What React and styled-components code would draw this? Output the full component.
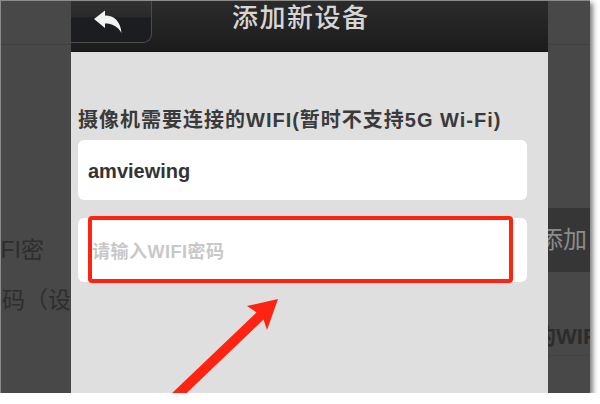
import React from "react";
import styled, { createGlobalStyle } from "styled-components";

const GlobalStyle = createGlobalStyle`
  html, body {
    margin: 0;
    padding: 0;
    background: #ffffff;
    overflow: hidden;
  }
  * {
    box-sizing: border-box;
  }
`;

const FONT = `"Liberation Sans", "Noto Sans CJK SC", sans-serif`;

const BackArrow = () => (
  <svg width="30" height="24" viewBox="0 0 30 24">
    <path
      d="M1 9 L12 0.5 L12 5.5 C21 5.5 27.5 11 28.5 23 C24.5 16 19 13.5 12 13.5 L12 18 Z"
      fill="#f2f2f2"
    />
  </svg>
);

const PointerArrow = () => (
  <ArrowLayer width="600" height="404" viewBox="0 0 600 404">
    <polygon
      points="278,299 267,330 263.5,319.6 173.5,405.6 166.5,398.4 256.5,312.4 247,306"
      fill="#ff2312"
    />
  </ArrowLayer>
);

const App = () => {
  return (
    <>
      <GlobalStyle />
      <Screen>
        <SideStrip>
          <NavGhost />
          <GhostBody>
            <GhostLine $pad={27}>WIFI密</GhostLine>
            <GhostLine $pad={0}>码（设</GhostLine>
          </GhostBody>
        </SideStrip>

        <Panel>
          <Header>
            <BackButton>
              <BackArrow />
            </BackButton>
            <Title>添加新设备</Title>
          </Header>

          <Body>
            <Label>摄像机需要连接的WIFI(暂时不支持5G Wi-Fi)</Label>
            <Field>
              <FieldValue>amviewing</FieldValue>
            </Field>
            <Field $gap={18} $h={64}>
              <Placeholder>请输入WIFI密码</Placeholder>
              <Highlight />
            </Field>
          </Body>
        </Panel>

        <RightStrip>
          <NavGhost />
          <GhostButton>添加</GhostButton>
          <GhostRow>的WIFI</GhostRow>
        </RightStrip>

        <PointerArrow />
      </Screen>
    </>
  );
};

export default App;

const Screen = styled.div`
  position: relative;
  display: flex;
  width: 590px;
  height: 393px;
  background: #484848;
  border-top: 1px solid #8c8c8c;
  border-left: 1px solid #8c8c8c;
  box-shadow: 3px 3px 5px rgba(0, 0, 0, 0.5);
  overflow: hidden;
  font-family: ${FONT};
`;

const SideStrip = styled.div`
  width: 70px;
  flex-shrink: 0;
  display: flex;
  flex-direction: column;
  overflow: hidden;
`;

const RightStrip = styled.div`
  flex: 1;
  display: flex;
  flex-direction: column;
  overflow: hidden;
`;

const NavGhost = styled.div`
  height: 44px;
  flex-shrink: 0;
  border-bottom: 1px solid #404040;
`;

const GhostBody = styled.div`
  display: flex;
  flex-direction: column;
  gap: 20px;
  padding-top: 190px;
`;

const GhostLine = styled.div`
  display: flex;
  justify-content: flex-end;
  height: 30px;
  line-height: 30px;
  padding-right: ${(p) => p.$pad}px;
  font-size: 23px;
  color: #2e2e2e;
  white-space: nowrap;
`;

const GhostButton = styled.div`
  margin-top: 163px;
  height: 64px;
  background: #363636;
  color: #8c8c8c;
  font-size: 24px;
  line-height: 64px;
  white-space: nowrap;
  text-indent: -9px;
`;

const GhostRow = styled.div`
  margin-top: 50px;
  height: 34px;
  line-height: 30px;
  font-size: 22px;
  font-weight: bold;
  color: #2c2c2c;
  white-space: nowrap;
  text-indent: -14px;
  border-bottom: 1px solid #434343;
`;

const Panel = styled.div`
  width: 477px;
  flex-shrink: 0;
  display: flex;
  flex-direction: column;
  background: #dfdfdf;
`;

const Header = styled.div`
  height: 51px;
  display: flex;
  align-items: flex-start;
  background: linear-gradient(#2b2b2b, #1c1c1c);
  border-bottom: 1px solid #151515;
`;

const BackButton = styled.div`
  width: 81px;
  height: 42px;
  display: flex;
  align-items: center;
  justify-content: center;
  padding-right: 6px;
  background: linear-gradient(#323232 0%, #2a2a2a 38%, #1b1d21 42%, #1b1d21 100%);
  border-right: 1px solid #4c4c4c;
  border-bottom: 1px solid #4c4c4c;
  border-bottom-right-radius: 9px;
`;

const Title = styled.div`
  margin-left: 80px;
  line-height: 34px;
  font-size: 26px;
  font-weight: 500;
  letter-spacing: 1.5px;
  color: #d6d6d6;
`;

const Body = styled.div`
  display: flex;
  flex-direction: column;
  padding: 54px 21px 0 7px;
`;

const Label = styled.div`
  height: 28px;
  line-height: 28px;
  font-size: 20px;
  font-weight: bold;
  letter-spacing: 1px;
  color: #3a3a3a;
  white-space: nowrap;
`;

const Field = styled.div`
  position: relative;
  margin-top: ${(p) => p.$gap || 6}px;
  height: ${(p) => p.$h || 60}px;
  display: flex;
  align-items: center;
  background: #ffffff;
  border-radius: 6px;
`;

const FieldValue = styled.span`
  padding: 3px 0 0 10px;
  font-size: 20px;
  font-weight: bold;
  color: #333333;
`;

const Placeholder = styled.span`
  padding: 0 0 0 14px;
  font-size: 18px;
  font-weight: bold;
  letter-spacing: 0.5px;
  color: #c8c8c8;
`;

const Highlight = styled.div`
  position: absolute;
  left: 10px;
  right: 14px;
  top: -2px;
  bottom: -1px;
  border: 4px solid #ff2312;
  border-radius: 4px;
`;

const ArrowLayer = styled.svg`
  position: absolute;
  left: -1px;
  top: -1px;
  pointer-events: none;
`;
